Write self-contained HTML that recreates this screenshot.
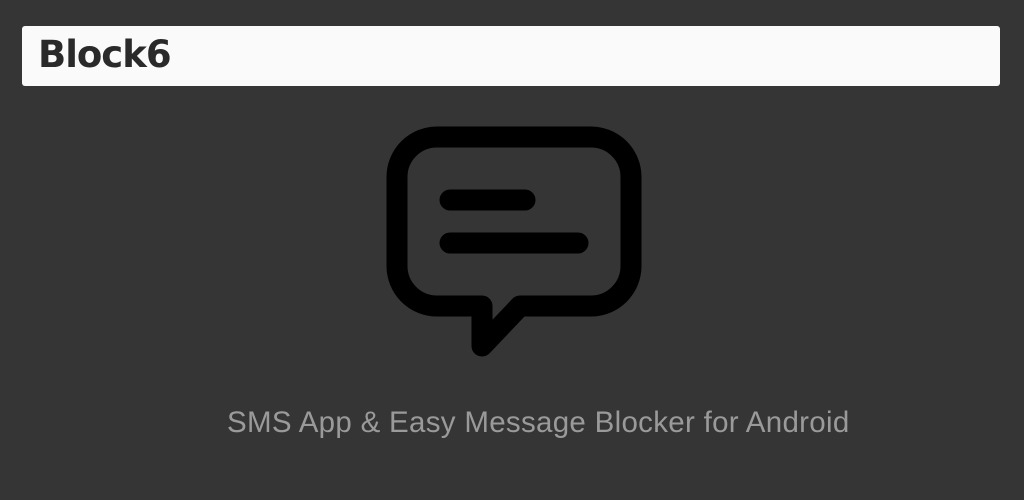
<!DOCTYPE html>
<html><head><style>
html,body{margin:0;padding:0;width:1024px;height:500px;background:#353535;overflow:hidden}
.bar{position:absolute;left:22px;top:26px;width:978px;height:60px;background:#fafafa;border-radius:3px}
.bar span{position:absolute;left:16px;top:7px;font:bold 37px "DejaVu Sans","Liberation Sans",sans-serif;color:#2a2a2a;letter-spacing:-1px}
.sub{position:absolute;left:227px;top:406px;white-space:nowrap;font:29.5px "Liberation Sans",sans-serif;color:#9a9a9a;letter-spacing:0.3px}
svg{position:absolute;left:0;top:0}
</style></head><body>
<div class="bar"><span>Block6</span></div>
<svg width="1024" height="500"><g fill="none" stroke="#000" stroke-width="21" stroke-linecap="round" stroke-linejoin="round">
<path d="M437 137 H591 A40 40 0 0 1 631 177 V266 A40 40 0 0 1 591 306 H520 L482 346 V306 H437 A40 40 0 0 1 397 266 V177 A40 40 0 0 1 437 137 Z"/>
<path d="M450 200 H525 M450 243 H578"/></g></svg>
<div class="sub">SMS App &amp; Easy Message Blocker for Android</div>
</body></html>
